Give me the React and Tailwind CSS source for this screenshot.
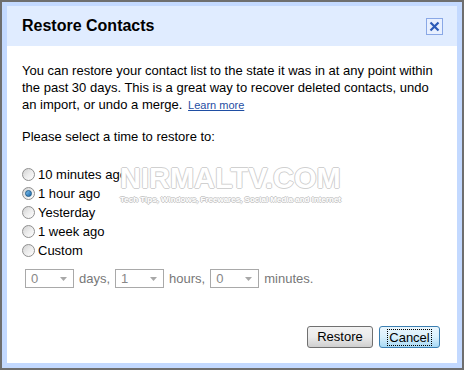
import React from "react";

const font = { fontFamily: '"Liberation Sans", Arial, sans-serif' };

function Radio({ checked }) {
  return (
    <span className="relative inline-flex h-[13px] w-[13px] shrink-0 items-center justify-center rounded-full border border-[#8f8f8f] bg-gradient-to-br from-[#d2d2d2] via-[#ececec] to-[#ffffff]">
      {checked && (
        <span className="h-[7px] w-[7px] rounded-full border border-[#1c5a8a] bg-gradient-to-br from-[#7fc4f2] to-[#1766a8]" />
      )}
    </span>
  );
}

function Select({ value }) {
  return (
    <div className="flex h-[19px] w-[49px] items-center justify-between border border-[#a9a9a9] bg-white pl-[5px] pr-[6px] text-[13px] text-[#888]">
      <span>{value}</span>
      <svg width="7" height="4" viewBox="0 0 7 4">
        <path d="M0 0h7L3.5 4z" fill="#a8a8a8" />
      </svg>
    </div>
  );
}

export default function App() {
  const options = ["10 minutes ago", "1 hour ago", "Yesterday", "1 week ago", "Custom"];

  return (
    <div style={font} className="relative h-[370px] w-[464px] overflow-hidden bg-[#6e6e6e] p-[2px] text-black">
      <div className="flex h-full flex-col bg-[#c3d9ff] px-[5px] pt-[4px] pb-[5px]">
        {/* header */}
        <div className="flex h-[40px] shrink-0 items-center justify-between bg-[#e0ecff] pl-[15px] pr-[14px]">
          <span className="text-[16px] font-bold">Restore Contacts</span>
          <div className="flex h-[17px] w-[17px] items-center justify-center border border-[#8aa8e6] bg-[#e8f0ff]">
            <svg width="11" height="11" viewBox="0 0 11 11">
              <path d="M1.5 1.5l8 8M9.5 1.5l-8 8" stroke="#2c5bb8" strokeWidth="2.2" />
            </svg>
          </div>
        </div>

        {/* body */}
        <div className="flex flex-1 flex-col bg-white px-[15px] pt-[16px] pb-[15px] text-[13px]">
          <p className="whitespace-nowrap leading-[17px]">
            You can restore your contact list to the state it was in at any point within
            <br />
            the past 30 days. This is a great way to recover deleted contacts, undo
            <br />
            an import, or undo a merge.{" "}
            <span className="ml-[2px] text-[11px] text-[#1f4ea3] underline">Learn more</span>
          </p>

          <p className="mt-[14px] leading-[17px]">Please select a time to restore to:</p>

          <div className="mt-[20px] flex flex-col">
            {options.map((o, i) => (
              <div key={o} className="flex h-[19px] items-center gap-[3px]">
                <Radio checked={i === 1} />
                <span className="leading-[17px]">{o}</span>
              </div>
            ))}
          </div>

          <div className="mt-[9px] ml-[3px] flex items-center gap-[5px] text-[13px] text-[#777]">
            <Select value="0" />
            <span>days,</span>
            <Select value="1" />
            <span>hours,</span>
            <Select value="0" />
            <span>minutes.</span>
          </div>

          <div className="mt-auto flex justify-end gap-[6px] pr-[2px]">
            <button className="h-[22px] w-[66px] rounded-[3px] border border-[#707070] bg-gradient-to-b from-[#f2f2f2] via-[#ebebeb] to-[#cfcfcf] text-[13px]">
              Restore
            </button>
            <button className="flex h-[22px] w-[61px] items-center justify-center rounded-[3px] border border-[#3c7fb1] bg-gradient-to-b from-[#eaf6fd] via-[#d9f0fc] to-[#a7d9f5] text-[13px]">
              <span className="border border-dotted border-black px-[1px] leading-[15px]">Cancel</span>
            </button>
          </div>
        </div>
      </div>

      {/* watermark */}
      <div className="pointer-events-none absolute left-[120px] top-[164px] flex flex-col items-start">
        <span
          className="text-[29px] font-bold leading-[28px] text-white"
          style={{
            textShadow: "1px 0 0 #d0d0d0, -1px 0 0 #d0d0d0, 0 1px 0 #d0d0d0, 0 -1px 0 #d0d0d0",
          }}
        >
          NIRMALTV.COM
        </span>
        <span
          className="mt-[3px] text-[8px] font-bold leading-[9px] text-white"
          style={{
            textShadow: "1px 0 0 #c8c8c8, -1px 0 0 #c8c8c8, 0 1px 0 #c8c8c8, 0 -1px 0 #c8c8c8",
          }}
        >
          Tech Tips, Windows, Freewares, Social Media and Internet
        </span>
      </div>
    </div>
  );
}
